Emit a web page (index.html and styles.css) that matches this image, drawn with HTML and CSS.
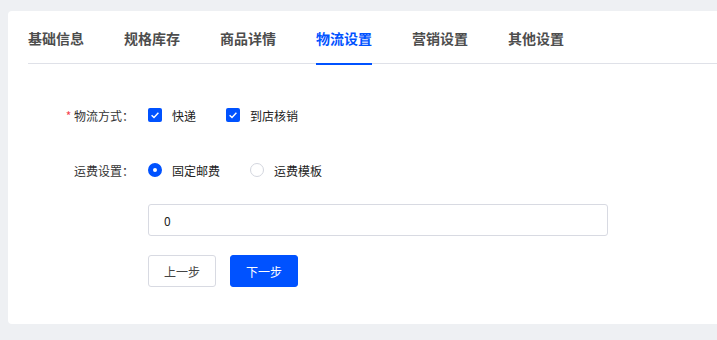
FILE: index.html
```html
<!DOCTYPE html>
<html lang="zh-CN">
<head>
<meta charset="UTF-8">
<meta name="viewport" content="width=device-width, initial-scale=1.0">
<title>物流设置</title>
<link rel="stylesheet" href="styles.css">
</head>
<body>

<div class="card">
  <div class="tabs">
    <div class="tab">基础信息</div>
    <div class="tab">规格库存</div>
    <div class="tab">商品详情</div>
    <div class="tab active">物流设置</div>
    <div class="tab">营销设置</div>
    <div class="tab">其他设置</div>
  </div>

  <div class="form">
    <div class="row row-ship">
      <div class="label"><span class="req">*</span> 物流方式：</div>
      <div class="controls">
        <label class="option"><span class="check on"><svg viewBox="0 0 14 14" width="14" height="14"><path d="M3.6 7.2 L6 9.5 L10.4 4.8" fill="none" stroke="#fff" stroke-width="1.4"/></svg></span>快递</label>
        <label class="option"><span class="check on"><svg viewBox="0 0 14 14" width="14" height="14"><path d="M3.6 7.2 L6 9.5 L10.4 4.8" fill="none" stroke="#fff" stroke-width="1.4"/></svg></span>到店核销</label>
      </div>
    </div>

    <div class="row row-fee">
      <div class="label">运费设置：</div>
      <div class="controls">
        <label class="option"><span class="radio on"></span>固定邮费</label>
        <label class="option"><span class="radio"></span>运费模板</label>
      </div>
    </div>

    <div class="row row-input">
      <div class="label"></div>
      <div class="controls">
        <input class="input" type="text" value="0">
      </div>
    </div>

    <div class="row row-btns">
      <div class="label"></div>
      <div class="controls">
        <button class="btn">上一步</button>
        <button class="btn primary">下一步</button>
      </div>
    </div>
  </div>
</div>

</body>
</html>
```

FILE: styles.css
```css
body {
  margin: 0;
  background-color: #eef0f3;
  font-family: "Noto Sans CJK SC", "Noto Sans", sans-serif;
  color: #333;
}
.card {
  margin: 11px 0 0 8px;
  height: 313px;
  background-color: #fff;
  border-radius: 4px 0 0 4px;
  padding-left: 20px;
}
.tabs {
  display: flex;
  gap: 40px;
  border-bottom: 1px solid #dfe1e8;
}
.tab {
  position: relative;
  padding: 16px 0 14px;
  line-height: 22px;
  font-size: 14px;
  font-weight: 600;
  color: #4d4d4d;
}
.tab.active {
  color: #0052ff;
}
.tab.active::after {
  content: "";
  position: absolute;
  left: 0;
  right: 0;
  bottom: -2px;
  height: 2px;
  background-color: #0052ff;
}
.form {
  margin-left: -20px;
  padding-top: 35px;
  font-size: 12px;
}
.row {
  display: flex;
  align-items: center;
  height: 32px;
}
.row-fee {
  margin-top: 23px;
}
.row-input {
  margin-top: 18px;
}
.row-btns {
  margin-top: 19px;
}
.label {
  width: 126px;
  padding-right: 14px;
  text-align: right;
  color: #333;
}
.req {
  color: #f5434f;
}
.controls {
  display: flex;
  align-items: center;
  gap: 30px;
}
.row-btns .controls {
  gap: 14px;
}
.option {
  display: flex;
  align-items: center;
  gap: 10px;
  color: #222;
}
.check {
  display: block;
  width: 14px;
  height: 14px;
  border-radius: 2px;
  background-color: #0052ff;
}
.check svg {
  display: block;
}
.radio {
  box-sizing: border-box;
  width: 14px;
  height: 14px;
  border-radius: 50%;
  border: 1px solid #d3d6de;
  background-color: #fff;
}
.radio.on {
  border: 5px solid #0052ff;
}
.input {
  box-sizing: border-box;
  width: 460px;
  height: 32px;
  padding: 0 15px;
  border: 1px solid #d8dae2;
  border-radius: 3px;
  font-family: inherit;
  font-size: 12px;
  color: #222;
  outline: none;
}
.btn {
  box-sizing: border-box;
  width: 68px;
  height: 32px;
  border: 1px solid #d8dae2;
  border-radius: 3px;
  background-color: #fff;
  font-family: inherit;
  font-size: 12px;
  color: #444;
  cursor: pointer;
}
.btn.primary {
  border-color: #0052ff;
  background-color: #0052ff;
  color: #fff;
}
```
